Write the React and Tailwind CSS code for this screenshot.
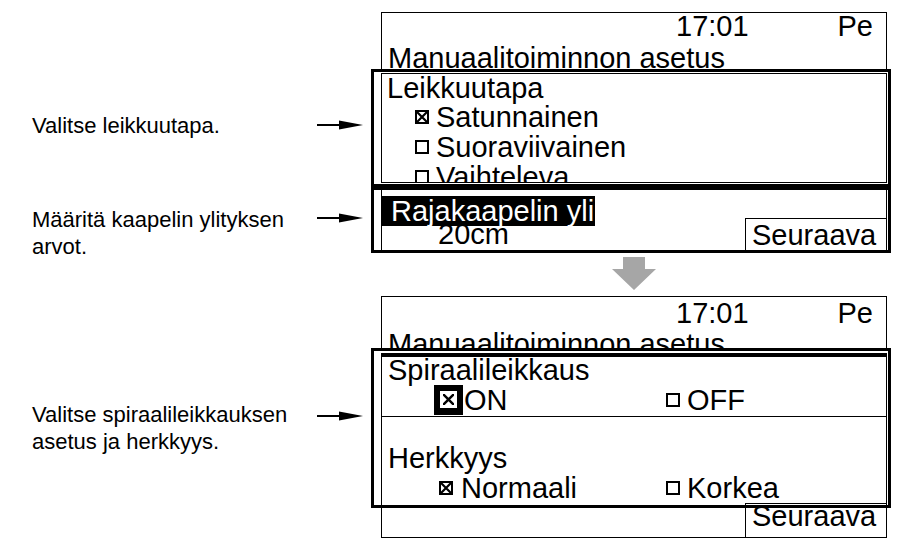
import React from 'react';

const Check = ({ on }) => (
  <span className="inline-flex w-[14px] h-[14px] border-2 border-black bg-white shrink-0">
    {on && (
      <svg viewBox="0 0 10 10" className="w-full h-full">
        <path d="M0 0L10 10M10 0L0 10" stroke="black" strokeWidth="2.2" />
      </svg>
    )}
  </span>
);

const Pointer = ({ className }) => (
  <svg width="46" height="10" viewBox="0 0 46 10" className={`shrink-0 ${className}`}>
    <line x1="0" y1="5" x2="24" y2="5" stroke="black" strokeWidth="2" />
    <polygon points="22,0.5 46,5 22,9.5" fill="black" />
  </svg>
);

// thick double-lined box that sits over the screen frame
const Focus = ({ className, innerClass, children }) => (
  <div className={`relative -ml-[11px] -mr-[5px] bg-white border-[3px] border-black flex flex-col ${className}`}>
    <div className={`flex-1 ml-[7px] mr-[1px] border-black overflow-hidden ${innerClass}`}>{children}</div>
  </div>
);

const Header = ({ className }) => (
  <>
    <div className={`flex leading-[26px] ${className}`}>
      <span className="ml-[294px]">17:01</span>
      <span className="ml-auto mr-[13px]">Pe</span>
    </div>
    <div className="leading-[30px] pl-[6px] whitespace-nowrap">Manuaalitoiminnon asetus</div>
  </>
);

export default function App() {
  return (
    <div className="w-[901px] h-[540px] bg-white flex overflow-hidden text-black font-['Liberation_Sans',Arial,sans-serif]">
      <div className="w-[371px] shrink-0 text-[22px] leading-[27px]">
        <div className="flex mt-[112px] pl-[32px]">
          <p>Valitse leikkuutapa.</p>
          <Pointer className="ml-auto mr-[8px] mt-[8px]" />
        </div>
        <div className="flex mt-[67px] pl-[32px]">
          <p>
            Määritä kaapelin ylityksen
            <br />
            arvot.
          </p>
          <Pointer className="ml-auto mr-[8px] mt-[7px]" />
        </div>
        <div className="flex mt-[141px] pl-[32px]">
          <p>
            Valitse spiraalileikkauksen
            <br />
            asetus ja herkkyys.
          </p>
          <Pointer className="ml-auto mr-[8px] mt-[10px]" />
        </div>
      </div>

      <div className="w-[530px] pt-[12px] text-[29px]">
        {/* screen 1 */}
        <div className="ml-[10px] w-[506px] border-x border-t border-black">
          <Header className="h-[30px]" />
          <Focus className="-mt-[4px] h-[118px]" innerClass="my-[1px] border">
            <div className="leading-[28px] pl-[5px]">Leikkuutapa</div>
            {[
              ['Satunnainen', true],
              ['Suoraviivainen', false],
              ['Vaihteleva', false],
            ].map(([label, on]) => (
              <div key={label} className="flex items-center h-[30px] leading-[30px] pl-[33px] whitespace-nowrap">
                <Check on={on} />
                <span className="ml-[7px]">{label}</span>
              </div>
            ))}
          </Focus>
          <Focus className="h-[66px]" innerClass="border-x">
            <div className="h-[28px]">
              <span className="inline-block mt-[1px] h-[30px] leading-[30px] bg-black text-white pl-[9px] pr-[1px]">
                Rajakaapelin yli
              </span>
            </div>
            <div className="flex h-[32px] leading-[32px]">
              <span className="ml-[56px]">20cm</span>
              <span className="ml-auto w-[141px] border-t border-l border-black pl-[6px]">Seuraava</span>
            </div>
          </Focus>
        </div>

        <div className="ml-[10px] w-[506px] flex justify-center mt-[4px]">
          <svg width="44" height="33" viewBox="0 0 44 33">
            <path d="M11 0H33V12H44L22 33L0 12H11Z" fill="#a6a6a6" />
          </svg>
        </div>

        {/* screen 2 */}
        <div className="ml-[10px] mt-[6px] w-[506px] border border-black">
          <Header className="h-[32px] pt-[3px]" />
          <Focus className="-mt-[11px] h-[160px]" innerClass="mt-[2px] border-x border-t-4">
            <div className="leading-[26px] pl-[6px]">Spiraalileikkaus</div>
            <div className="flex items-center h-[34px] border-b border-black pl-[52px] leading-[30px]">
              <span className="flex items-center w-[232px]">
                <span className="flex items-center justify-center w-[29px] h-[30px] bg-black">
                  <span className="flex w-[17px] h-[17px] bg-white p-[3px]">
                    <svg viewBox="0 0 10 10" className="w-full h-full">
                      <path d="M0 0L10 10M10 0L0 10" stroke="black" strokeWidth="2.2" />
                    </svg>
                  </span>
                </span>
                <span className="ml-[1px]">ON</span>
              </span>
              <Check on={false} />
              <span className="ml-[7px]">OFF</span>
            </div>
            <div className="mt-[26px] leading-[30px] pl-[6px]">Herkkyys</div>
            <div className="flex items-center h-[30px] leading-[30px] pl-[57px]">
              <span className="flex items-center w-[227px]">
                <Check on />
                <span className="ml-[8px]">Normaali</span>
              </span>
              <Check on={false} />
              <span className="ml-[7px]">Korkea</span>
            </div>
            <div className="ml-auto w-[141px] border-t border-black" />
          </Focus>
          <div className="relative -mt-[5px] ml-auto w-[141px] h-[34px] border-l border-black leading-[26px] pl-[6px]">
            Seuraava
          </div>
        </div>
      </div>
    </div>
  );
}
